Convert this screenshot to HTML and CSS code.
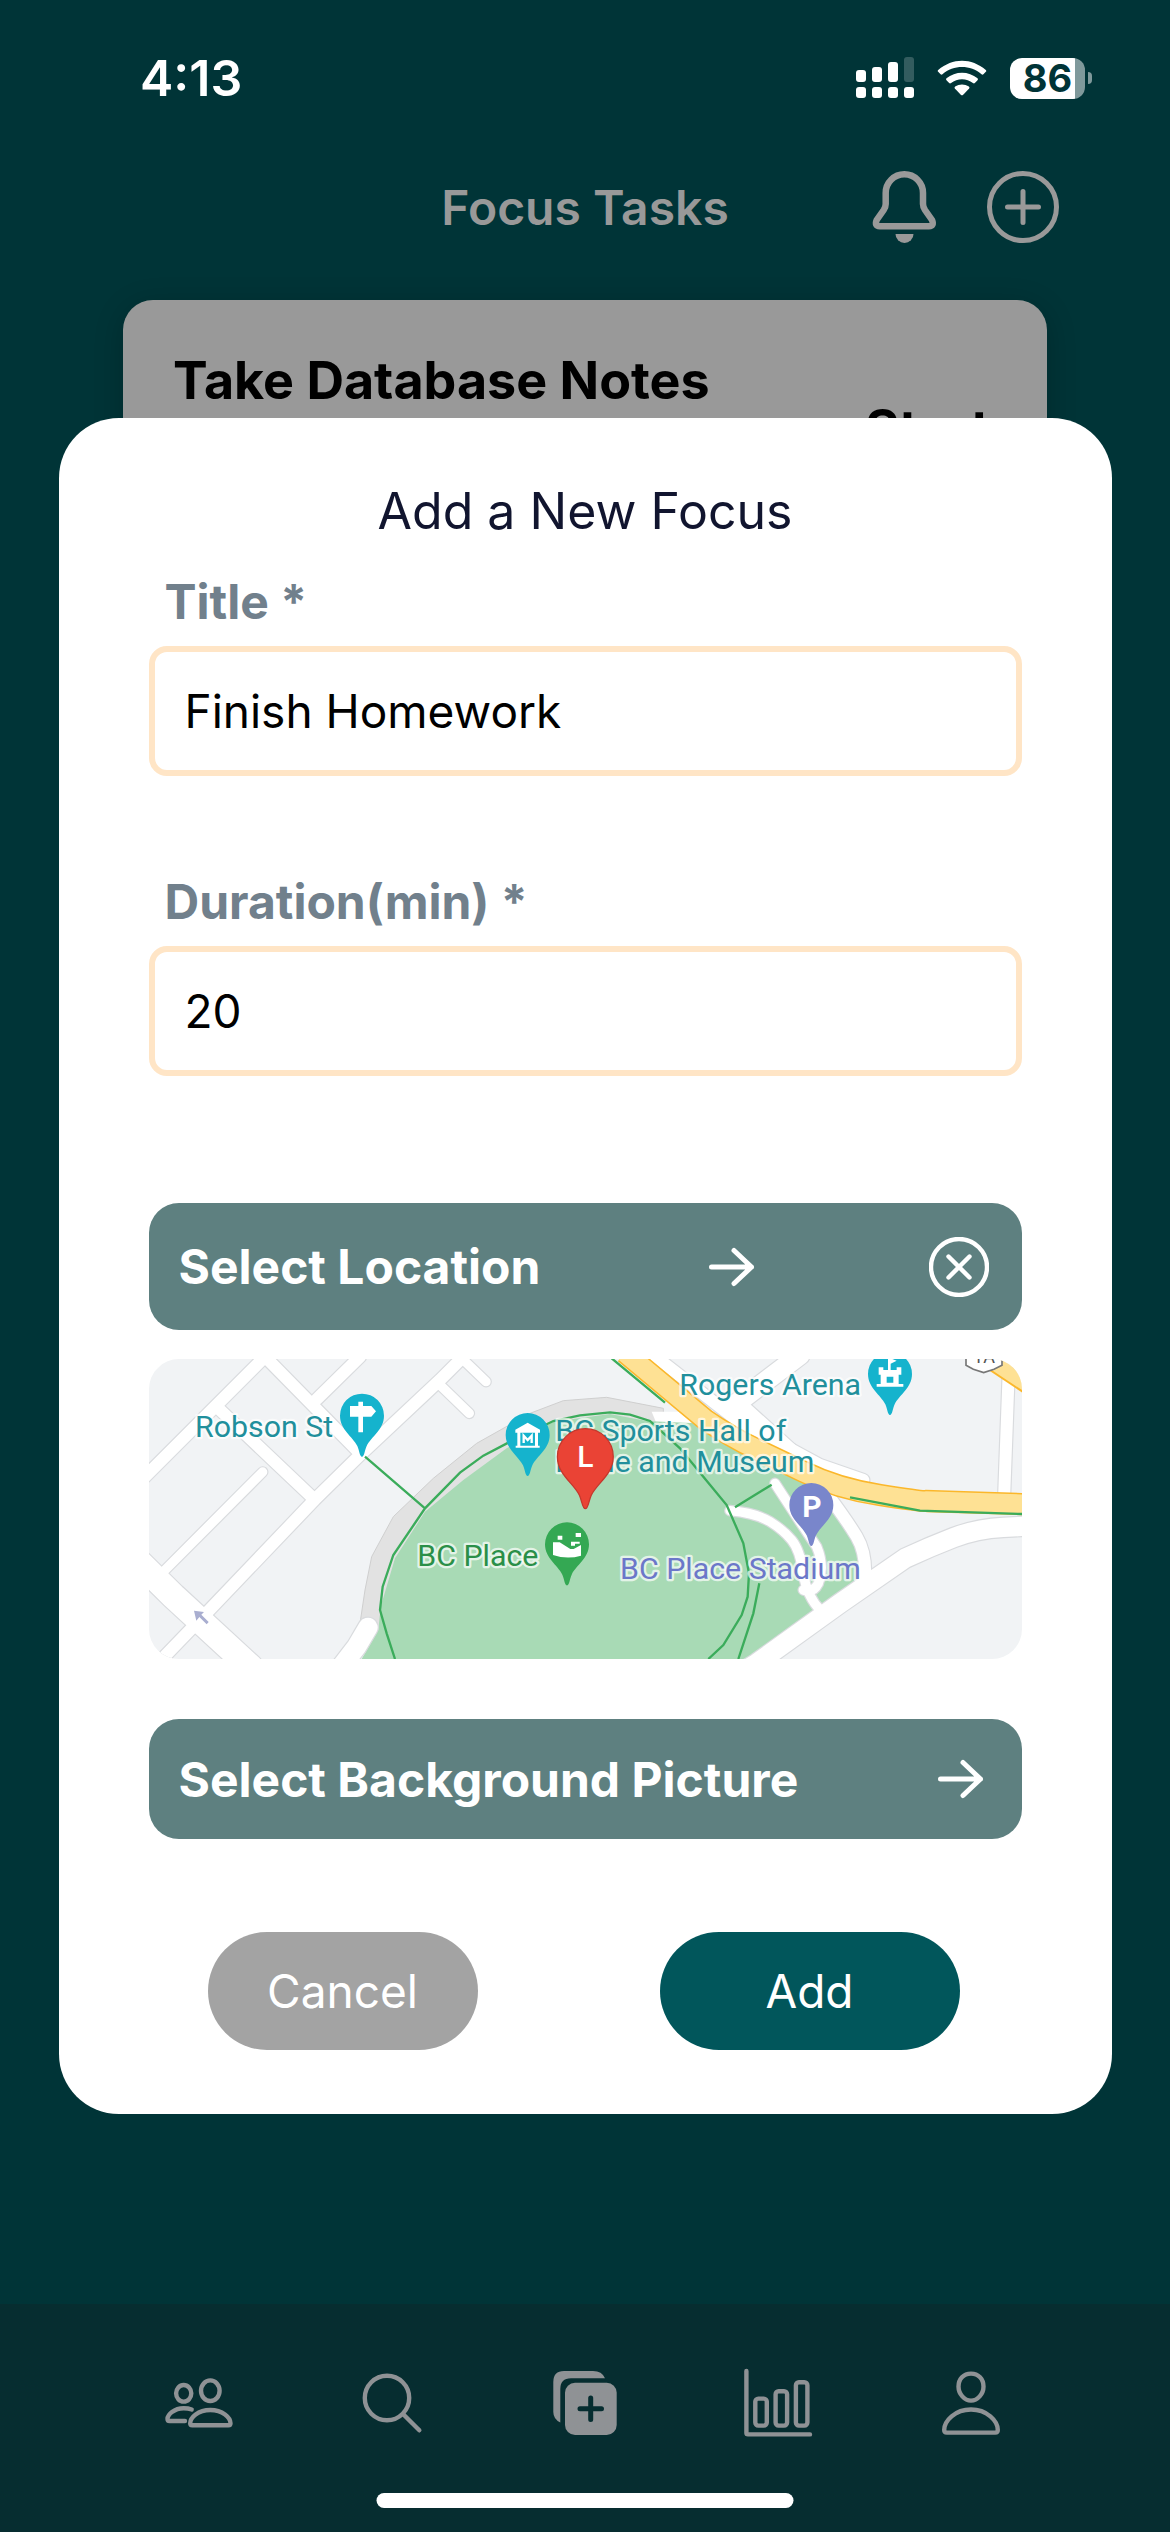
FILE: index.html
```html
<!DOCTYPE html>
<html lang="en">
<head>
<meta charset="utf-8">
<meta name="viewport" content="width=device-width, initial-scale=1">
<title>Focus Tasks</title>
<link rel="stylesheet" href="styles.css">
</head>
<body>
<div class="screen">
  <div class="status-bar">
    <span class="status-time">4:13</span>
    <div class="status-icons">
      <svg class="signal" viewBox="0 0 58 42" aria-hidden="true">
        <rect x="0" y="13" width="10" height="12" rx="3"/>
        <rect x="16" y="10" width="10" height="15" rx="3"/>
        <rect x="32" y="5" width="10" height="20" rx="3"/>
        <rect x="48" y="0" width="10" height="25" rx="3" opacity=".2"/>
        <rect x="0" y="30" width="10" height="11" rx="3"/>
        <rect x="16" y="30" width="10" height="11" rx="3"/>
        <rect x="32" y="30" width="10" height="11" rx="3"/>
        <rect x="48" y="30" width="10" height="11" rx="3"/>
      </svg>
      <svg class="wifi" viewBox="0 0 52 42" aria-hidden="true">
        <path d="M1 13.5Q0 12.500 1 11.500C16-1.500 36-1.500 51 11.500Q52 12.500 51 13.500L48.500 16Q47.500 17 46.500 16C35 6 17 6 5.500 16Q4.500 17 3.500 16Z"/>
        <path d="M9.700 22.300Q8.700 21.300 9.700 20.300C19 12.500 33 12.500 42.300 20.300Q43.300 21.300 42.300 22.300L39.500 25.300Q38.500 26.300 37.500 25.300C31 20 21 20 14.500 25.300Q13.500 26.300 12.500 25.300Z"/>
        <path d="M18.500 31Q17.600 30 18.800 29C23 26 29 26 33.200 29Q34.400 30 33.500 31L27 37.700Q26 38.600 25 37.700Z"/>
      </svg>
      <div class="battery">
        <span class="battery-body">86</span>
        <span class="battery-tip"></span>
      </div>
    </div>
  </div>

  <header class="app-header">
    <h1 class="app-title">Focus Tasks</h1>
    <div class="header-actions">
      <button class="icon-button" type="button" aria-label="Notifications">
        <svg class="icon" viewBox="0 0 72 72">
          <path d="M17.700 22A18.650 18.650 0 0 1 55 22V33Q55 36 57 39L64 49Q66.500 55.200 61 55.200H11.700Q6.200 55.200 8.700 49L15.700 39Q17.700 36 17.700 33Z" fill="none" stroke="currentColor" stroke-width="6.500"/>
          <path d="M27.500 63H45.500A9 9 0 0 1 27.500 63Z" fill="currentColor"/>
        </svg>
      </button>
      <button class="icon-button" type="button" aria-label="New focus">
        <svg class="icon line" viewBox="0 0 72 72">
          <circle cx="36" cy="36" r="33.500" stroke-width="5"/>
          <path d="M20.500 36H51.500M36 20.500V51.500" stroke-width="5"/>
        </svg>
      </button>
    </div>
  </header>

  <main class="task-list">
    <article class="task-card">
      <h2 class="task-title">Take Database Notes</h2>
      <button class="task-start" type="button">Start</button>
    </article>
  </main>

  <nav class="tab-bar" aria-label="Main">
    <a class="tab" href="#friends" aria-label="Friends">
      <svg class="icon line" viewBox="0 0 72 72">
        <ellipse cx="20.700" cy="26.300" rx="7.600" ry="8.300"/>
        <ellipse cx="47.300" cy="23.700" rx="9.300" ry="10.300"/>
        <path d="M27.200 56.300C27.200 50.500 35 43 47.300 43S67.500 50.500 67.500 56.300Q67.500 58.300 65.500 58.300H29.200Q27.200 58.300 27.200 56.300Z"/>
        <path d="M28.700 42.500C25.500 41.300 23 41.200 20.700 41.200C11 41.200 4.500 48 4.500 52Q4.500 54 6.500 54H22"/>
      </svg>
    </a>
    <a class="tab" href="#search" aria-label="Search">
      <svg class="icon line" viewBox="0 0 72 72">
        <circle cx="31" cy="31" r="22.200"/>
        <path d="M47.500 47.500L63.300 63.300"/>
      </svg>
    </a>
    <a class="tab" href="#focus" aria-label="Focus">
      <svg class="icon" viewBox="0 0 72 72">
        <path d="M56 11.300H22Q11.300 11.300 11.300 22V55.500Q4.300 52 4.300 45V15Q4.300 4 15 4H44Q53 4 56 11.300Z" fill="currentColor"/>
        <rect x="16" y="15.700" width="51.700" height="52.300" rx="10" fill="currentColor"/>
        <path d="M31 41.700H52.500M41.700 31V52.500" stroke="#062d30" stroke-width="5" stroke-linecap="round"/>
      </svg>
    </a>
    <a class="tab" href="#stats" aria-label="Statistics">
      <svg class="icon line" viewBox="0 0 72 72">
        <path d="M4.400 4V66Q4.400 67.400 6 67.400H68"/>
        <rect x="13.300" y="31.600" width="11.500" height="27" rx="3"/>
        <rect x="33.600" y="24.300" width="11.500" height="34.300" rx="3"/>
        <rect x="53.900" y="15.300" width="11.500" height="43.300" rx="3"/>
      </svg>
    </a>
    <a class="tab" href="#profile" aria-label="Profile">
      <svg class="icon line" viewBox="0 0 72 72">
        <path d="M36 6.600C43.500 6.600 48.500 12 48.500 19.500S42.500 33.600 36 33.600S23.500 27 23.500 19.500S28.500 6.600 36 6.600Z"/>
        <path d="M9.200 63C9.200 54 20 42.500 36 42.500S62.800 54 62.800 63Q62.800 65.600 60.200 65.600H11.800Q9.200 65.600 9.200 63Z"/>
      </svg>
    </a>
  </nav>
  <span class="home-indicator"></span>
</div>

<div class="overlay">
  <form class="modal" role="dialog" aria-labelledby="modal-title">
    <h2 class="modal-title" id="modal-title">Add a New Focus</h2>

    <div class="field">
      <label class="field-label" for="title">Title *</label>
      <input class="field-input" id="title" type="text" value="Finish Homework">
    </div>
    <div class="field">
      <label class="field-label" for="duration">Duration(min) *</label>
      <input class="field-input" id="duration" type="text" inputmode="numeric" value="20">
    </div>

    <div class="location-row">
      <button class="location-button" type="button">
        <span>Select Location</span>
        <svg class="arrow line" viewBox="0 0 48 48" aria-hidden="true"><path d="M3.500 24H43.500M26 7.500L43.500 24L26 40.500"/></svg>
      </button>
      <button class="icon-button" type="button" aria-label="Clear location">
        <svg class="clear line" viewBox="0 0 60 60"><circle cx="30" cy="30" r="28"/><path d="M19.500 19.500L40.500 40.500M40.500 19.500L19.500 40.500"/></svg>
      </button>
    </div>

    <svg class="map" viewBox="57 57 2619 900" preserveAspectRatio="xMidYMid slice" role="img" aria-label="Map around BC Place">
      <defs>
        <path id="pin" d="M0 123C-7 123-8 104-14 91C-28 62-66 42-66 0A66 66 0 1 1 66 0C66 42 28 62 14 91C8 104 7 123 0 123Z"/>
        <g id="streets">
          <path class="street" d="M40 415L410 45M405 50L690 340M560 178L690 50M50 1005L240 808L555 478L690 345L930 120L1010 40M265 205L550 475"/>
          <path class="lane" d="M105 690L398 396M925 130L1018 220M985 45L1068 125"/>
          <path class="avenue" d="M20 660L130 768L360 980"/>
        </g>
        <g id="stadium-roads">
          <path class="lane" d="M1800 512Q1880 520 1920 545T1985 600T2020 700T2075 815"/>
          <path class="lane" d="M1935 430L2000 530L2060 620Q2085 680 2065 730Q2050 760 2020 750"/>
          <path class="street" d="M2090 460Q2150 540 2180 590T2205 720"/>
          <path class="road" d="M1800 1020L1880 970L2130 790L2325 655Q2400 620 2470 593T2620 562L2700 558"/>
          <path class="road" d="M630 985L680 920L714 862"/>
        </g>
        <g id="arena-roads">
          <path class="road" d="M1800 205L2010 45"/>
          <path class="street" d="M1570 45L1820 240L2070 375L2200 420"/>
          <path class="road" d="M1820 195L1975 335"/>
          <path class="street" d="M2636 100L2622 480"/>
        </g>
      </defs>
      <rect x="57" y="57" width="2619" height="900" fill="#f1f3f5"/>
      <path d="M57 57H112L57 110Z" fill="#fff"/>
      <path d="M690 850L705 750L725 650L790 530L910 415L1040 310L1200 220L1300 182L1430 172L1600 205V300L1200 400L900 700L800 900Z" fill="#e2e2e2" stroke="#cfcfcf" stroke-width="3"/>
      <path d="M1565 215H1680V300H1600Z" fill="#fff"/>
      <path d="M695 957L745 870L752 800L795 655L885 515L1000 420L1130 325L1270 245L1440 222L1550 243L1700 250L1960 400L2100 470L2190 590L2215 700L2060 830L1840 980H690Z" fill="#a8dab5"/>
      <g class="road-casing"><use href="#streets"/><use href="#stadium-roads"/><use href="#arena-roads"/></g>
      <g class="road-fill"><use href="#streets"/><use href="#stadium-roads"/><use href="#arena-roads"/></g>
      <g fill="none">
        <path d="M1485 38L1725 238Q1800 290 1880 328L2020 395Q2120 445 2250 465T2390 483L2700 493" stroke="#fbb72b" stroke-width="67"/>
        <path d="M1485 38L1725 238Q1800 290 1880 328L2020 395Q2120 445 2250 465T2390 483L2700 493" stroke="#fee194" stroke-width="58"/>
      </g>
      <path d="M2580 90L2620 50H2690V163Z" fill="#fee194"/>
      <path d="M2580 90L2690 163" fill="none" stroke="#fbb72b" stroke-width="6"/>
      <g fill="none" stroke="#3bac5b" stroke-width="7">
        <path d="M705 350L885 505M795 957L770 880L750 810L758 740L790 645L885 505L990 398L1060 347L1135 308L1270 243L1350 226L1440 217L1500 224L1560 243L1650 325L1720 410L1790 495L1840 610L1857 700L1853 770L1835 825L1780 915L1735 957"/>
        <path d="M1888 730L1870 820L1825 957M1815 502L1925 434M1445 55L1605 188M2160 472L2370 512L2676 522"/>
      </g>
      <path d="M192 812L222 816L214 824L236 846L230 853L208 831L199 842Z" fill="#a9aed0"/>
      <path d="M2508 50V76L2530 88L2561 98L2592 88L2616 76V50Z" fill="#fff" stroke="#777" stroke-width="5"/>
      <text class="shield-text" x="2562" y="70" text-anchor="middle">1A</text>

      <g class="map-label">
        <text x="195" y="290" fill="#218f9c">Robson St</text>
        <text x="1648" y="165" fill="#218f9c">Rogers Arena</text>
        <text x="1276" y="302" fill="#218f9c">BC Sports Hall of</text>
        <text x="1276" y="395" fill="#218f9c">Fame and Museum</text>
        <text x="862" y="678" fill="#2a8f48">BC Place</text>
        <text x="1470" y="716" fill="#6b77c9">BC Place Stadium</text>
      </g>

      <g transform="translate(696 227)">
        <use href="#pin" fill="#15b3cd"/>
        <path d="M-36-29H-11V-42H3V-29H28L42-13L28 3H3V50H-11V3H-36Z" fill="#fff"/>
      </g>
      <g transform="translate(1193 285)">
        <use href="#pin" fill="#15b3cd"/>
        <path d="M0-37L37-16V-7H31V32H36V38H-36V32H-31V-7H-37V-16ZM-22-7V32H22V-7Z" fill="#fff" fill-rule="evenodd"/>
        <path d="M-12 24V2L0 15L12 2V24" fill="none" stroke="#fff" stroke-width="7"/>
      </g>
      <g transform="translate(2280 102)">
        <use href="#pin" fill="#15b3cd"/>
        <path d="M-34-20H-20V-12H-6V-50L20-40L2-31V-12H20V-20H34V2H26V30H40V38H-40V30H-28V2H-34ZM-10 8V26H10V8Z" fill="#fff" fill-rule="evenodd"/>
      </g>
      <g transform="translate(1311 613)">
        <use href="#pin" fill="#34a853"/>
        <path d="M-42-6H-22L10 14H20L42 2V34Q0 46-42 32ZM12-8H38V-2H24V4H12ZM-28-26H-14V-14H-28ZM26-34H42V-22H26Z" fill="#fff"/>
      </g>
      <g transform="translate(2044 495)">
        <use href="#pin" fill="#7986cb"/>
        <text class="pin-letter" x="2" y="37" text-anchor="middle">P</text>
      </g>
      <g transform="translate(1366 350)">
        <use href="#pin" fill="#ea4335" stroke="#c4372c" stroke-width="3" transform="scale(1.270)"/>
        <text class="pin-letter light" x="0" y="32" text-anchor="middle">L</text>
      </g>
    </svg>

    <button class="picture-button" type="button">
      <span>Select Background Picture</span>
      <svg class="arrow line" viewBox="0 0 48 48" aria-hidden="true"><path d="M3.500 24H43.500M26 7.500L43.500 24L26 40.500"/></svg>
    </button>

    <div class="actions">
      <button class="action cancel" type="button">Cancel</button>
      <button class="action add" type="submit">Add</button>
    </div>
  </form>
</div>
</body>
</html>
```
FILE: styles.css
```css
* { box-sizing: border-box; }

body {
  margin: 0;
  background: #003437;
  font-family: Inter, "Liberation Sans", sans-serif;
}

h1, h2 { margin: 0; }

button {
  margin: 0;
  padding: 0;
  border: 0;
  background: none;
  color: inherit;
  font: inherit;
  cursor: pointer;
}

svg { display: block; }

.line {
  fill: none;
  stroke: currentColor;
  stroke-width: 4.4;
  stroke-linecap: round;
  stroke-linejoin: round;
}

.icon { width: 72px; height: 72px; }

.screen {
  position: relative;
  display: flex;
  flex-direction: column;
  min-height: 100vh;
}

/* Status bar */
.status-bar {
  display: flex;
  align-items: center;
  justify-content: space-between;
  height: 156px;
  padding: 0 78px 0 140px;
  color: #fff;
}

.status-time { font-size: 50px; font-weight: 600; }

.status-icons { display: flex; align-items: center; gap: 22px; }

.signal { width: 58px; height: 42px; fill: #fff; }
.wifi { width: 52px; height: 42px; padding-top: 2px; fill: #fff; }

.battery { display: flex; align-items: center; gap: 3px; }

.battery-body {
  width: 75px;
  height: 41px;
  border-radius: 12px;
  background: linear-gradient(to right, #fff 65px, #7f999b 65px);
  color: #003437;
  font-size: 38px;
  font-weight: 700;
  line-height: 41px;
  text-align: center;
}

.battery-tip {
  width: 4px;
  height: 12px;
  border-radius: 0 6px 6px 0;
  background: #7f999b;
}

/* Header */
.app-header {
  display: grid;
  grid-template-columns: 1fr auto 1fr;
  align-items: center;
  height: 102px;
  padding: 0 111px;
  color: #999;
}

.app-title { grid-column: 2; font-size: 48px; font-weight: 600; }

.header-actions { display: flex; justify-content: flex-end; gap: 47px; }

/* Tasks */
.task-list { flex: 1; padding: 42px 123px; }

.task-card {
  display: flex;
  align-items: center;
  justify-content: space-between;
  min-height: 256px;
  padding: 49px 57px 49px 50px;
  border-radius: 30px;
  background: #999;
  box-shadow: 0 6px 30px rgba(0, 0, 0, .2);
  color: #000;
}

.task-title {
  align-self: flex-start;
  font-size: 52px;
  font-weight: 700;
  line-height: 64px;
}

.task-start { font-size: 52px; font-weight: 700; }

/* Tab bar */
.tab-bar {
  display: flex;
  height: 228px;
  padding: 63px 102px 0;
  background: #062d30;
}

.tab {
  display: flex;
  flex: 1;
  align-items: flex-start;
  justify-content: center;
  color: #8f9295;
}

.home-indicator {
  position: absolute;
  bottom: 24px;
  left: 50%;
  width: 417px;
  height: 15px;
  border-radius: 8px;
  background: #fff;
  transform: translateX(-50%);
}

/* Modal */
.overlay {
  position: absolute;
  inset: 0;
  display: flex;
  align-items: center;
  justify-content: center;
}

.modal {
  display: flex;
  flex-direction: column;
  width: 90%;
  padding: 61px 90px 64px;
  border-radius: 60px;
  background: #fff;
}

.modal-title {
  margin-bottom: 29px;
  color: #11152f;
  font-size: 50px;
  font-weight: 400;
  line-height: 64px;
  text-align: center;
}

.field {
  display: flex;
  flex-direction: column;
  gap: 14px;
  margin-bottom: 96px;
}

.field-label {
  padding-left: 16px;
  color: #71808c;
  font-size: 48px;
  font-weight: 700;
  line-height: 60px;
}

.field-input {
  width: 100%;
  height: 130px;
  padding: 0 30px;
  border: 6px solid #ffe5c6;
  border-radius: 18px;
  background: #fff;
  color: #000;
  font-family: inherit;
  font-size: 46px;
}

.location-row,
.picture-button {
  display: flex;
  align-items: center;
  border-radius: 30px;
  background: #5e8080;
  color: #fff;
  font-size: 48px;
  font-weight: 700;
}

.location-row {
  gap: 173px;
  height: 127px;
  margin-top: 31px;
  padding-right: 33px;
}

.location-button {
  display: flex;
  flex: 1;
  align-items: center;
  justify-content: space-between;
  align-self: stretch;
  padding-left: 30px;
}

.arrow { width: 48px; height: 48px; stroke-width: 5; }
.clear { width: 60px; height: 60px; }

.map {
  width: 100%;
  height: 300px;
  margin: 29px 0 60px;
  border-radius: 30px;
}

/* Each road is drawn twice: a wider grey edge, then the white surface */
.road-casing,
.road-fill {
  fill: none;
  stroke-linecap: round;
}

.road-casing { --edge: 7px; stroke: #d9dbde; }
.road-fill { --edge: 0px; stroke: #fff; }

.lane { stroke-width: calc(28px + var(--edge)); }
.street { stroke-width: calc(36px + var(--edge)); }
.road { stroke-width: calc(58px + var(--edge)); }
.avenue { stroke-width: calc(76px + var(--edge)); }

.map-label text,
.pin-letter,
.shield-text { font-family: Roboto, "Liberation Sans", sans-serif; }

.map-label text {
  font-size: 91px;
  stroke: rgba(255, 255, 255, .7);
  stroke-width: 14px;
  stroke-linejoin: round;
  paint-order: stroke;
}

.pin-letter { fill: #fff; font-size: 90px; font-weight: 700; }
.pin-letter.light { font-weight: 500; }
.shield-text { fill: #555; font-size: 54px; }

.picture-button {
  justify-content: space-between;
  height: 120px;
  padding: 0 37px 0 30px;
}

.actions {
  display: flex;
  justify-content: space-between;
  margin-top: 93px;
  padding: 0 62px 0 59px;
}

.action {
  height: 118px;
  border-radius: 60px;
  color: #fff;
  font-size: 46px;
  font-weight: 400;
}

.cancel { width: 270px; background: #a3a3a3; }
.add { width: 300px; background: #01565b; }
```
